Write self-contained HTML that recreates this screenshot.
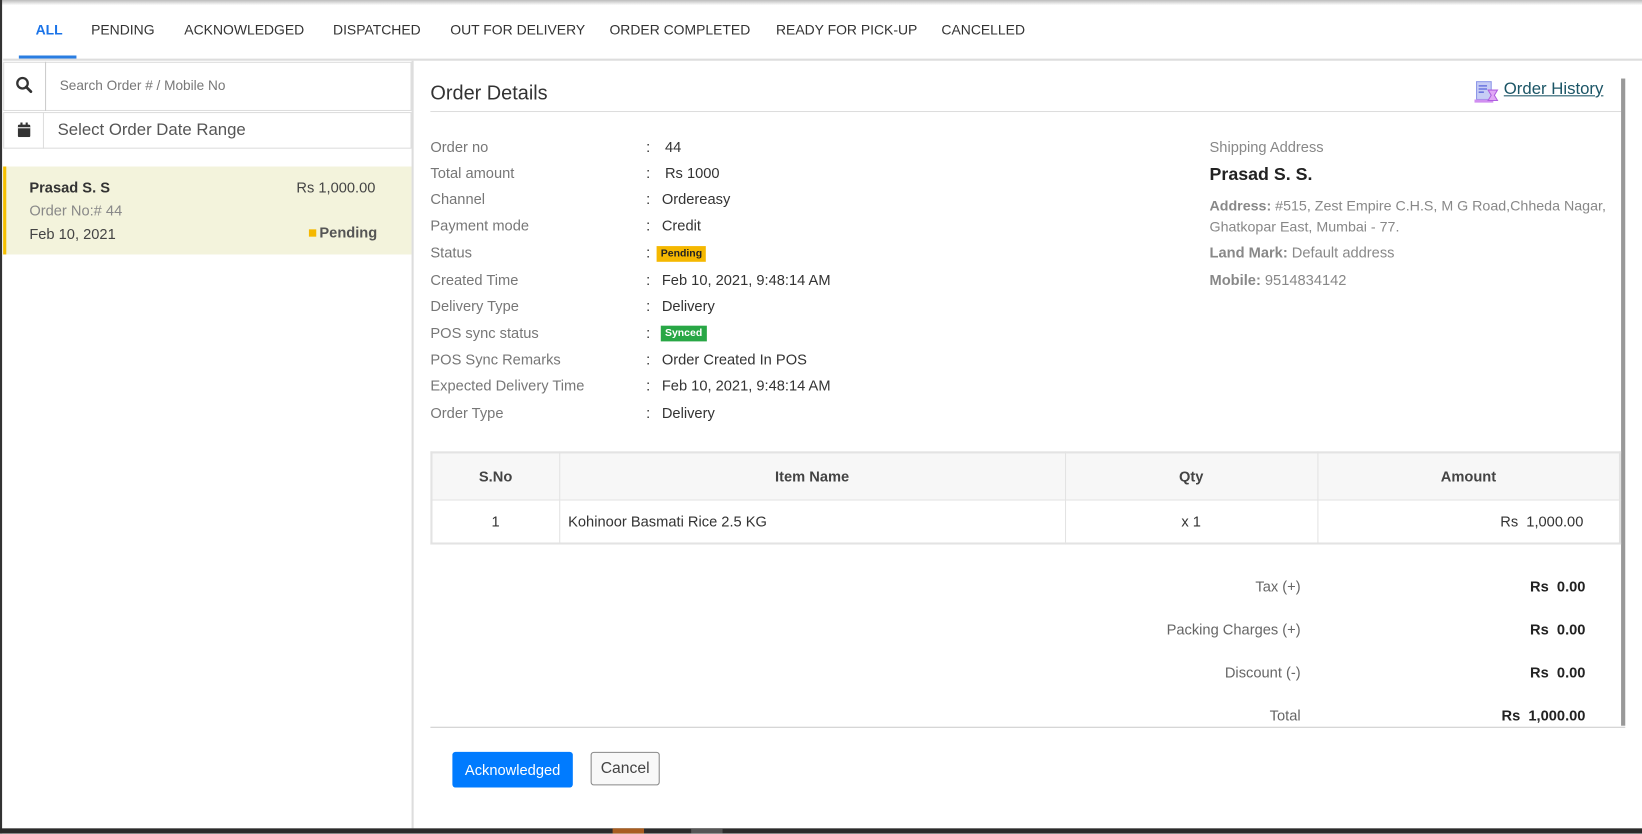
<!DOCTYPE html>
<html><head><meta charset="utf-8"><style>
*{box-sizing:border-box;margin:0;padding:0}
html,body{width:1642px;height:834px;overflow:hidden;background:#fff}
#w{position:absolute;left:0;top:0;width:1568px;height:796px;transform:scale(1.0472);transform-origin:0 0;font-family:"Liberation Sans",sans-serif;font-size:14px;color:#333}
.a{position:absolute;white-space:nowrap}
.tab{top:21px;font-size:13.3px;color:#333}
.lbl{left:411px;color:#777;font-size:14px}
.col{left:617px;color:#333}
.val{left:632px;color:#333}
.badge{display:inline-block;font-size:10px;font-weight:bold;padding:2px 4px;}
th,td{border:1px solid #e3e3e3}
</style></head><body><div id="w">
<div class="a" style="left:0;top:0;width:1568px;height:5px;background:linear-gradient(#bbb,#fff)"></div>
<div class="a" style="left:0;top:0;width:2px;height:796px;background:#333"></div>
<div class="a tab" style="left:34px;color:#1a73e8;font-weight:bold">ALL</div>
<div class="a tab" style="left:87px">PENDING</div>
<div class="a tab" style="left:176px">ACKNOWLEDGED</div>
<div class="a tab" style="left:318px">DISPATCHED</div>
<div class="a tab" style="left:430px">OUT FOR DELIVERY</div>
<div class="a tab" style="left:582px">ORDER COMPLETED</div>
<div class="a tab" style="left:741px">READY FOR PICK-UP</div>
<div class="a tab" style="left:899px">CANCELLED</div>
<div class="a" style="left:18px;top:53px;width:55px;height:3px;background:#2a7de1"></div>
<div class="a" style="left:3px;top:56px;width:1565px;height:2px;background:#ddd"></div>
<div class="a" style="left:393px;top:58px;width:2px;height:733px;background:#ddd"></div>
<div class="a" style="left:3px;top:59px;width:390px;height:47px;border:1px solid #ddd"></div>
<div class="a" style="left:43px;top:59px;width:1px;height:47px;background:#ccc"></div>
<svg class="a" style="left:15px;top:73px" width="16" height="16" viewBox="0 0 16 16"><circle cx="6.5" cy="6.5" r="5" fill="none" stroke="#333" stroke-width="2.2"/><path d="M10 10l4.5 4.5" stroke="#333" stroke-width="2.6" stroke-linecap="round"/></svg>
<div class="a" style="left:57px;top:74px;color:#777;font-size:13px">Search Order # / Mobile No</div>
<div class="a" style="left:3px;top:107px;width:390px;height:35px;border:1px solid #ddd"></div>
<div class="a" style="left:41px;top:107px;width:1px;height:35px;background:#ddd"></div>
<svg class="a" style="left:17px;top:117px" width="12" height="14" viewBox="0 0 12 14"><rect x="0" y="2" width="12" height="12" rx="1.5" fill="#333"/><rect x="2.5" y="0" width="2" height="3" fill="#333"/><rect x="7.5" y="0" width="2" height="3" fill="#333"/><rect x="0" y="4.5" width="12" height="1" fill="#fff"/></svg>
<div class="a" style="left:55px;top:116px;color:#555;font-size:16px">Select Order Date Range</div>
<div class="a" style="left:3px;top:159px;width:390px;height:84px;background:#f3f3dc;border-left:3px solid #f5c000"></div>
<div class="a" style="left:28px;top:171px;font-weight:bold;font-size:14px;color:#333">Prasad S. S</div>
<div class="a" style="left:283px;top:171px;color:#444">Rs 1,000.00</div>
<div class="a" style="left:28px;top:193px;color:#888">Order No:# 44</div>
<div class="a" style="left:28px;top:215px;color:#444">Feb 10, 2021</div>
<div class="a" style="left:295px;top:219px;width:7px;height:7px;background:#f5b800"></div>
<div class="a" style="left:305px;top:214px;font-weight:bold;color:#555">Pending</div>
<div class="a" style="left:411px;top:79px;font-size:19px;color:#333">Order Details</div>
<div class="a" style="left:411px;top:106px;width:1137px;height:1px;background:#ddd"></div>
<svg class="a" style="left:1408px;top:77px" width="24" height="22" viewBox="0 0 24 22"><rect x="2" y="1" width="14" height="17" fill="#c7cdf5" stroke="#8b95e8"/><path d="M4 5h8M4 8h8M4 11h5" stroke="#6b76e0" stroke-width="1.5"/><rect x="0" y="18" width="18" height="3" fill="#d08ef0"/><path d="M13 9h9l-3 5 3 5h-9l3-5z" fill="#e0a8f5" stroke="#b060e0"/></svg>
<div class="a" style="left:1436px;top:77px;font-size:16px;color:#1b5566;text-decoration:underline">Order History</div>
<div class="a" style="left:1548px;top:75px;width:4px;height:618px;background:#999"></div>

<div class="a lbl" style="top:132px">Order no</div><div class="a col" style="top:132px">:</div><div class="a val" style="top:132px;left:635px">44</div>
<div class="a lbl" style="top:157px">Total amount</div><div class="a col" style="top:157px">:</div><div class="a val" style="top:157px;left:635px">Rs 1000</div>
<div class="a lbl" style="top:182px">Channel</div><div class="a col" style="top:182px">:</div><div class="a val" style="top:182px">Ordereasy</div>
<div class="a lbl" style="top:207px">Payment mode</div><div class="a col" style="top:207px">:</div><div class="a val" style="top:207px">Credit</div>
<div class="a lbl" style="top:233px">Status</div><div class="a col" style="top:233px">:</div><div class="a" style="left:627px;top:232px"><span class="badge" style="background:#f5b800;color:#222">Pending</span></div>
<div class="a lbl" style="top:259px">Created Time</div><div class="a col" style="top:259px">:</div><div class="a val" style="top:259px">Feb 10, 2021, 9:48:14 AM</div>
<div class="a lbl" style="top:284px">Delivery Type</div><div class="a col" style="top:284px">:</div><div class="a val" style="top:284px">Delivery</div>
<div class="a lbl" style="top:310px">POS sync status</div><div class="a col" style="top:310px">:</div><div class="a" style="left:631px;top:308px"><span class="badge" style="background:#28a745;color:#fff">Synced</span></div>
<div class="a lbl" style="top:335px">POS Sync Remarks</div><div class="a col" style="top:335px">:</div><div class="a val" style="top:335px">Order Created In POS</div>
<div class="a lbl" style="top:360px">Expected Delivery Time</div><div class="a col" style="top:360px">:</div><div class="a val" style="top:360px">Feb 10, 2021, 9:48:14 AM</div>
<div class="a lbl" style="top:386px">Order Type</div><div class="a col" style="top:386px">:</div><div class="a val" style="top:386px">Delivery</div>

<div class="a" style="left:1155px;top:132px;color:#888">Shipping Address</div>
<div class="a" style="left:1155px;top:157px;font-size:17px;font-weight:bold;color:#222">Prasad S. S.</div>
<div class="a" style="left:1155px;top:187px;color:#888;line-height:20px;font-size:13.6px"><b>Address:</b> #515, Zest Empire C.H.S, M G Road,Chheda Nagar,<br>Ghatkopar East, Mumbai - 77.</div>
<div class="a" style="left:1155px;top:233px;color:#888"><b>Land Mark:</b> Default address</div>
<div class="a" style="left:1155px;top:259px;color:#888"><b>Mobile:</b> 9514834142</div>

<table class="a" style="left:411px;top:431px;width:1137px;border-collapse:collapse;border:2px solid #e3e3e3;font-size:14px">
<tr style="height:45px;background:#f7f7f7;font-weight:bold;color:#444"><th style="width:122px">S.No</th><th style="width:483px">Item Name</th><th style="width:241px">Qty</th><th>Amount</th></tr>
<tr style="height:42px;color:#333"><td style="text-align:center">1</td><td style="padding-left:8px">Kohinoor Basmati Rice 2.5 KG</td><td style="text-align:center">x 1</td><td style="text-align:right;padding-right:34px">Rs&nbsp; 1,000.00</td></tr>
</table>

<div class="a" style="right:326px;top:552px;color:#666">Tax (+)</div><div class="a" style="right:54px;top:552px;font-weight:bold;color:#222">Rs&nbsp; 0.00</div>
<div class="a" style="right:326px;top:593px;color:#666">Packing Charges (+)</div><div class="a" style="right:54px;top:593px;font-weight:bold;color:#222">Rs&nbsp; 0.00</div>
<div class="a" style="right:326px;top:634px;color:#666">Discount (-)</div><div class="a" style="right:54px;top:634px;font-weight:bold;color:#222">Rs&nbsp; 0.00</div>
<div class="a" style="right:326px;top:675px;color:#666">Total</div><div class="a" style="right:54px;top:675px;font-weight:bold;color:#222">Rs&nbsp; 1,000.00</div>
<div class="a" style="left:411px;top:694px;width:1141px;height:1px;background:#ccc"></div>

<div class="a" style="left:432px;top:718px;width:115px;height:34px;background:#007bff;border-radius:3px;color:#fff;text-align:center;line-height:34px">Acknowledged</div>
<div class="a" style="left:564px;top:718px;width:66px;height:32px;border:1px solid #888;border-radius:3px;background:#f8f8f8;color:#444;text-align:center;line-height:30px;font-size:15px">Cancel</div>

<div class="a" style="left:0;top:791px;width:1568px;height:5px;background:#2b2b2b"></div>
<div class="a" style="left:585px;top:791px;width:30px;height:5px;background:#a85d20"></div>
<div class="a" style="left:660px;top:791px;width:30px;height:5px;background:#555"></div>
</div></body></html>
